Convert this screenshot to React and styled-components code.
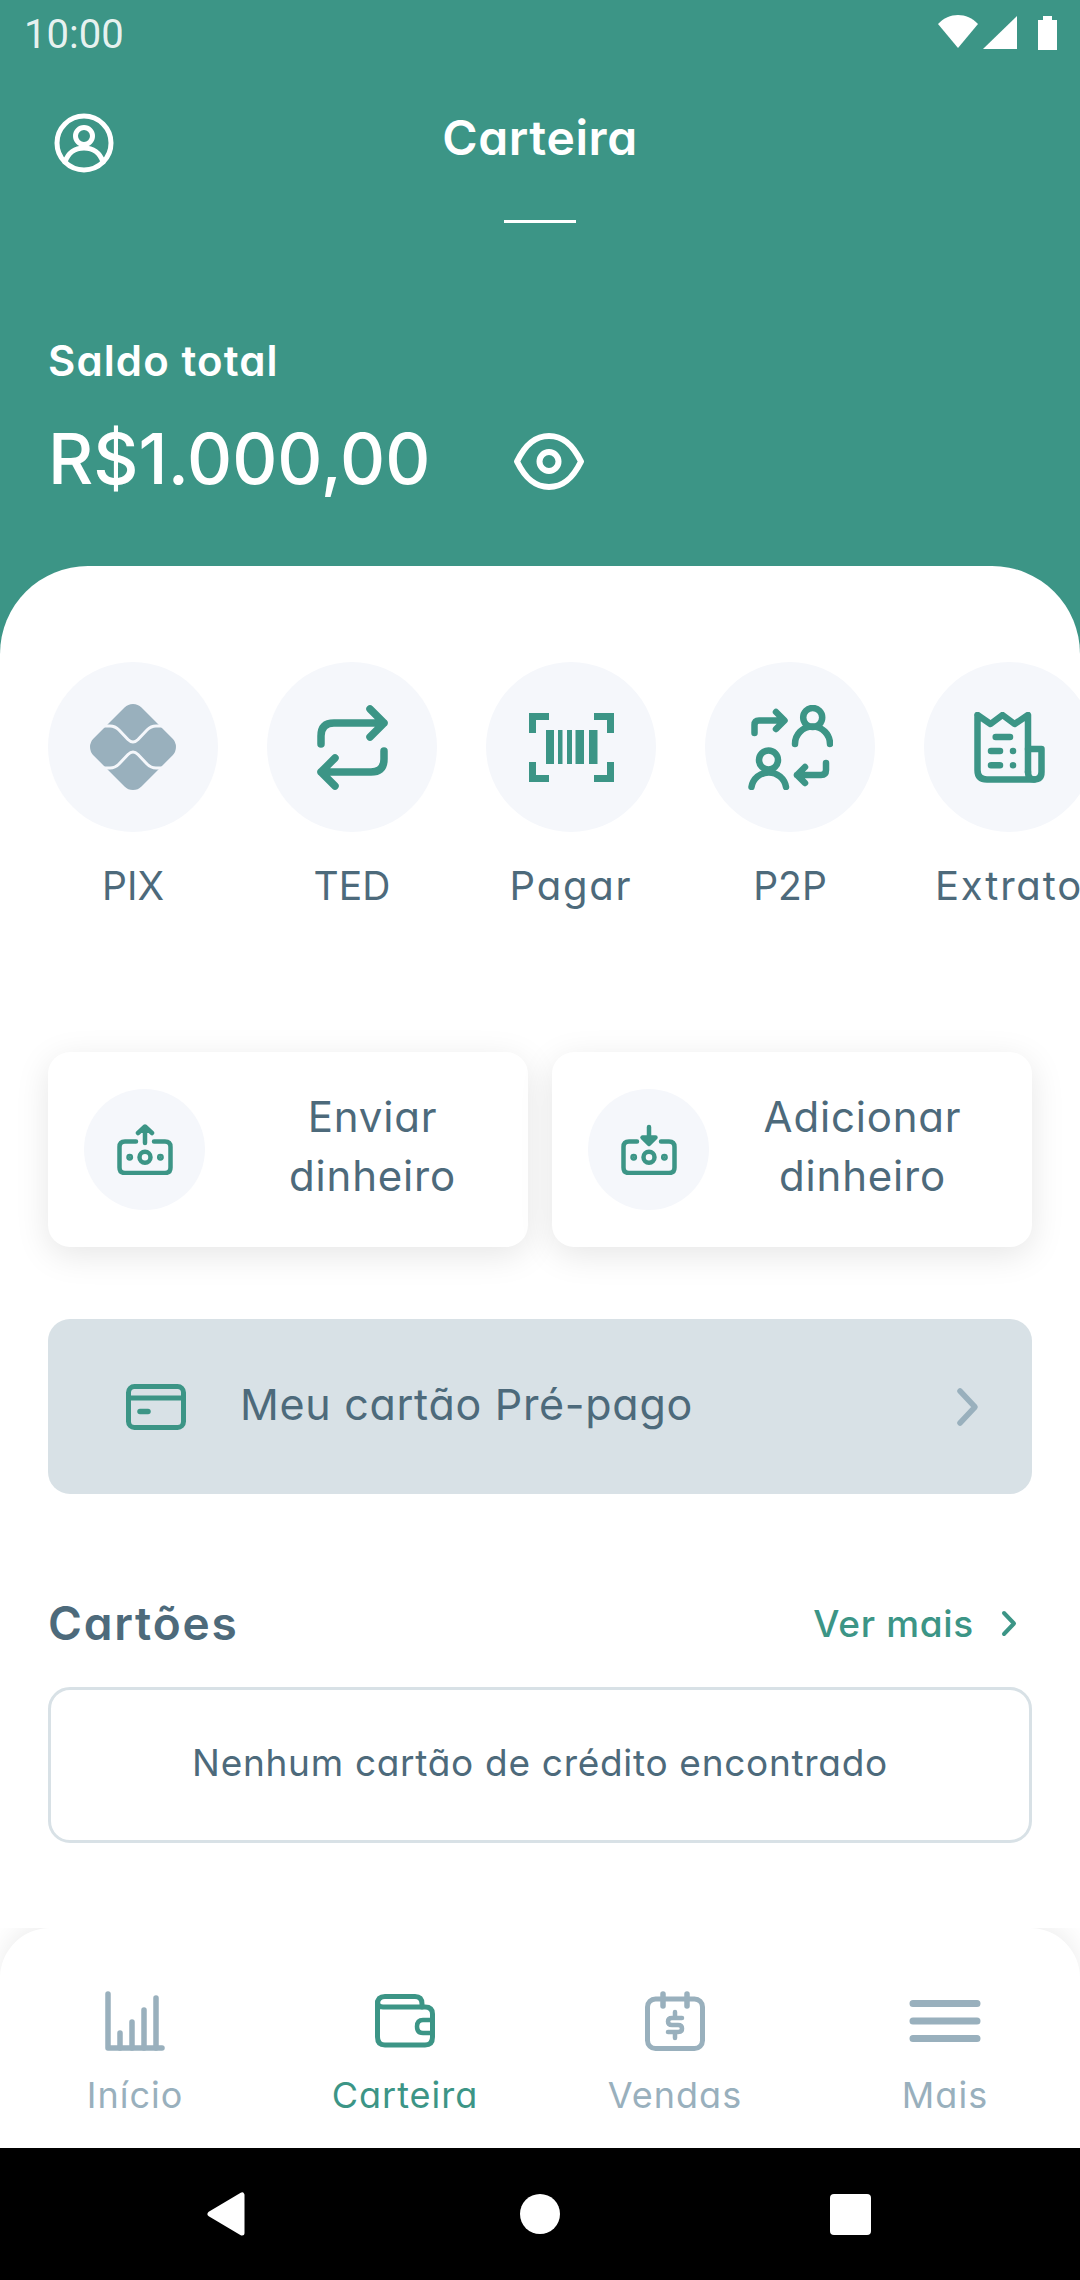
import React from "react";
import styled, { createGlobalStyle } from "styled-components";

const TEAL = "#3c9586";
const SLATE = "#4d6a7b";
const MUTED = "#99b0bd";
const SOFT = "#f5f7fb";
const LINE = "#d8e1e6";

const GlobalStyle = createGlobalStyle`
  html, body { margin: 0; padding: 0; background: #fff; }
  * { box-sizing: border-box; }
  body {
    font-family: Inter, "Open Sans", sans-serif;
    font-feature-settings: "cv11" 1;
  }
`;

const Screen = styled.div`
  width: 1080px;
  height: 2280px;
  display: flex;
  flex-direction: column;
  overflow: hidden;
  background: #fff;
`;

const Header = styled.header`
  height: 654px;
  margin-bottom: -88px;
  flex: none;
  background: ${TEAL};
  color: #fff;
`;

const StatusBar = styled.div`
  height: 70px;
  padding: 15px 22px 0 24px;
  display: flex;
  justify-content: space-between;
  align-items: flex-start;
`;

const Clock = styled.span`
  font-family: Roboto, sans-serif;
  font-size: 40px;
  line-height: 40px;
  color: rgba(255, 255, 255, 0.9);
`;

const TitleRow = styled.div`
  display: grid;
  grid-template-columns: 1fr auto 1fr;
  padding: 43px 54px 0;
`;

const TitleBlock = styled.div`
  display: flex;
  flex-direction: column;
  align-items: center;
`;

const Title = styled.h1`
  margin: 0;
  font-size: 48px;
  line-height: 50px;
  font-weight: 600;
  letter-spacing: 0.6px;
`;

const TitleRule = styled.div`
  width: 72px;
  height: 3px;
  margin-top: 57px;
  background: #fff;
`;

const Balance = styled.div`
  padding: 113px 48px 0;
`;

const BalanceLabel = styled.div`
  font-size: 42px;
  line-height: 50px;
  font-weight: 600;
  letter-spacing: 1.1px;
`;

const BalanceRow = styled.div`
  display: flex;
  align-items: center;
  gap: 84px;
  margin-top: 28px;
`;

const BalanceValue = styled.div`
  font-size: 70px;
  line-height: 90px;
  font-weight: 500;
`;

const EyeSlot = styled.div`
  display: flex;
  margin-top: 5px;
`;

const Sheet = styled.main`
  position: relative;
  flex: 1;
  min-height: 0;
  padding-top: 96px;
  background: #fff;
  border-radius: 88px 88px 0 0;
`;

const ActionStrip = styled.div`
  display: flex;
  gap: 49px;
  padding-left: 48px;
  overflow: hidden;
`;

const Action = styled.div`
  flex: none;
  width: 170px;
  display: flex;
  flex-direction: column;
  align-items: center;
`;

const Disc = styled.div`
  flex: none;
  width: ${(p) => p.$size}px;
  height: ${(p) => p.$size}px;
  display: flex;
  align-items: center;
  justify-content: center;
  border-radius: 50%;
  background: ${SOFT};
`;

const ActionLabel = styled.span`
  margin-top: 24px;
  font-size: ${(p) => (p.$caps ? 39 : 40)}px;
  line-height: 60px;
  letter-spacing: ${(p) => (p.$caps ? 0 : 1.8)}px;
  white-space: nowrap;
  color: ${SLATE};
`;

const Content = styled.div`
  padding: 136px 48px 0;
`;

const MoneyCards = styled.div`
  display: grid;
  grid-template-columns: 480px 480px;
  gap: 24px;
`;

const MoneyCard = styled.div`
  height: 195px;
  padding-left: 36px;
  display: flex;
  align-items: center;
  background: #fff;
  border-radius: 22px;
  box-shadow: 0 8px 34px rgba(0, 0, 0, 0.1);
`;

const MoneyText = styled.div`
  flex: 1;
  padding-bottom: 8px;
  padding-left: ${(p) => p.$left}px;
  padding-right: ${(p) => p.$right}px;
  text-align: center;
  font-size: 42px;
  line-height: 59px;
  letter-spacing: 0.8px;
  color: ${SLATE};
`;

const PrepaidRow = styled.div`
  height: 175px;
  margin-top: 72px;
  padding: 0 53px 0 78px;
  display: flex;
  align-items: center;
  background: ${LINE};
  border-radius: 22px;
`;

const PrepaidText = styled.span`
  flex: 1;
  margin-left: 54px;
  padding-bottom: 6px;
  font-size: 43px;
  letter-spacing: 0.7px;
  color: ${SLATE};
`;

const SectionHead = styled.div`
  height: 60px;
  margin-top: 99px;
  display: flex;
  align-items: center;
  justify-content: space-between;
  padding-right: 15px;
`;

const SectionTitle = styled.h2`
  margin: 0;
  font-size: 46px;
  font-weight: 600;
  letter-spacing: 1.8px;
  color: ${SLATE};
`;

const MoreLink = styled.div`
  display: flex;
  align-items: center;
  gap: 27px;
  font-size: 37px;
  font-weight: 500;
  letter-spacing: 0.7px;
  color: ${TEAL};
`;

const EmptyBox = styled.div`
  height: 156px;
  margin-top: 34px;
  padding-bottom: 6px;
  display: flex;
  align-items: center;
  justify-content: center;
  border: 3px solid ${LINE};
  border-radius: 22px;
  font-size: 37px;
  letter-spacing: 0.7px;
  color: ${SLATE};
`;

const TabBar = styled.nav`
  flex: none;
  height: 220px;
  padding-top: 63px;
  display: grid;
  grid-template-columns: repeat(4, 270px);
  background: #fff;
  border-radius: 50px 50px 0 0;
  box-shadow: 0 -6px 24px rgba(0, 0, 0, 0.07);
`;

const Tab = styled.div`
  display: flex;
  flex-direction: column;
  align-items: center;
  color: ${(p) => (p.$active ? TEAL : MUTED)};
`;

const TabIcon = styled.div`
  height: 60px;
  display: flex;
  align-items: center;
  justify-content: center;
`;

const TabLabel = styled.span`
  margin-top: 19px;
  font-size: 36px;
  line-height: 50px;
  letter-spacing: 1px;
`;

const SystemBar = styled.div`
  flex: none;
  height: 132px;
  padding-right: 2px;
  display: flex;
  align-items: center;
  justify-content: center;
  background: #000;
`;

const BackButton = styled.svg`
  margin-right: 275px;
`;

const HomeDot = styled.div`
  width: 40px;
  height: 40px;
  margin-right: 270px;
  border-radius: 50%;
  background: #fff;
`;

const RecentSquare = styled.div`
  width: 41px;
  height: 41px;
  border-radius: 4px;
  background: #fff;
`;

const Stroke = ({ w, h, width = 6, color = TEAL, children }) => (
  <svg
    width={w}
    height={h}
    viewBox={`0 0 ${w} ${h}`}
    fill="none"
    stroke={color}
    strokeWidth={width}
    strokeLinecap="round"
    strokeLinejoin="round"
  >
    {children}
  </svg>
);

const StatusIcons = () => (
  <svg width="120" height="36" viewBox="0 0 120 36" fill="#fff">
    <path d="M0 9C11-3 29-3 40 9L20 33Z" />
    <path d="M79 1V34H45Z" />
    <path d="M100 5h5V1h9v4h5v30h-19Z" />
  </svg>
);

const ProfileIcon = () => (
  <Stroke w={60} h={60} width={5} color="#fff">
    <circle cx="30" cy="30" r="27" />
    <circle cx="30" cy="23" r="8.5" />
    <path d="M11 49C14 40 21 35 30 35C39 35 46 40 49 49" />
  </Stroke>
);

const EyeIcon = () => (
  <Stroke w={70} h={57} width={6} color="#fff">
    <path d="M3 28.5C12 10 22 3 35 3C48 3 58 10 67 28.5C58 47 48 54 35 54C22 54 12 47 3 28.5Z" />
    <circle cx="35" cy="28.5" r="9.5" />
  </Stroke>
);

const PixIcon = () => (
  <svg width="86" height="86" viewBox="0 0 86 86" fill="none">
    <rect x="9.1" y="9.1" width="67.8" height="67.8" rx="12" fill={MUTED} transform="rotate(45 43 43)" />
    <g stroke={SOFT} strokeWidth="3">
      <path d="M4 22H20Q25 22 29 26L38 35.5Q43 40.5 48 35.5L57 26Q61 22 66 22H82" />
      <path d="M4 64H20Q25 64 29 60L38 50.5Q43 45.5 48 50.5L57 60Q61 64 66 64H82" />
    </g>
  </svg>
);

const TedIcon = () => (
  <Stroke w={71} h={85} width={7.5}>
    <path d="M4 39V31Q4 18 17 18H67M53 4L67 18L53 32" />
    <path d="M67 46V54Q67 67 54 67H4M18 53L4 67L18 81" />
  </Stroke>
);

const BarcodeIcon = () => (
  <Stroke w={85} h={69} width={7}>
    <g strokeLinecap="butt" strokeLinejoin="miter">
      <path d="M3.5 20V3.5H20M65 3.5H81.5V20M3.5 49V65.5H20M65 65.5H81.5V49" />
    </g>
    <g fill={TEAL} stroke="none">
      <rect x="17" y="17" width="8" height="34" />
      <rect x="29" y="17" width="4.5" height="34" />
      <rect x="38" y="17" width="5" height="34" />
      <rect x="46.5" y="17" width="8.5" height="34" />
      <rect x="60" y="17" width="8.5" height="34" />
    </g>
  </Stroke>
);

const TransferIcon = () => (
  <Stroke w={85} h={85} width={6.5}>
    <circle cx="64.7" cy="12.5" r="9.5" />
    <path d="M47 39A17.5 17.5 0 0 1 82 39" />
    <circle cx="20.5" cy="55" r="9.5" />
    <path d="M3.5 82A17.5 17.5 0 0 1 38 82" />
    <path d="M6.5 28V20Q6.5 15.5 11 15.5H36M28 7L36.5 15.5L28 24" />
    <path d="M78 58V65Q78 70 73 70H49M57 62L49 70L57 78" />
  </Stroke>
);

const ReceiptIcon = () => (
  <Stroke w={71} h={71} width={6.5}>
    <path d="M3.5 3V58Q3.5 67.5 13 67.5H60M3.5 3L16.5 12L28.5 3L40.6 12L54 3V60" />
    <path d="M54 37H67.5V60Q67.5 67.5 60 67.5Q54 67.5 54 60" />
    <path d="M21.7 25H36M17 39H26M17 53.3H26" />
    <path d="M39 39H39.01M39 53.3H39.01" />
  </Stroke>
);

const actions = [
  { label: "PIX", caps: true, icon: <PixIcon /> },
  { label: "TED", caps: true, icon: <TedIcon /> },
  { label: "Pagar", icon: <BarcodeIcon /> },
  { label: "P2P", caps: true, icon: <TransferIcon /> },
  { label: "Extrato", icon: <ReceiptIcon /> },
];

// same banknote, the arrow and the gap it sits in change
const MoneyIcon = ({ arrow }) => {
  const up = arrow === "up";
  const left = up ? 19 : 16;
  const right = up ? 37 : 40;
  return (
    <Stroke w={56} h={51} width={4.5}>
      <path d={`M${left} 17.5H8Q2.5 17.5 2.5 23V43.5Q2.5 49 8 49H48Q53.5 49 53.5 43.5V23Q53.5 17.5 48 17.5H${right}`} />
      <circle cx="28" cy="33.3" r="5.5" />
      <circle cx="12.7" cy="33.3" r="1.2" fill={TEAL} />
      <circle cx="43.4" cy="33.3" r="1.2" fill={TEAL} />
      {up ? (
        <path d="M28 19V3M21 9L28 2.5L35 9" fill={TEAL} />
      ) : (
        <path d="M28 3V18M21.5 13.5H34.5L28 20Z" fill={TEAL} />
      )}
    </Stroke>
  );
};

const CardIcon = () => (
  <Stroke w={60} h={46} width={5}>
    <rect x="2.5" y="2.5" width="55" height="41" rx="6" />
    <path d="M2.5 14H57.5" />
    <path d="M14 27.5H22" strokeWidth="5.5" />
  </Stroke>
);

const Chevron = ({ w, h, width, color, d }) => (
  <Stroke w={w} h={h} width={width} color={color}>
    <path d={d} />
  </Stroke>
);

const ChartIcon = () => (
  <Stroke w={60} h={60} width={5.5} color={MUTED}>
    <path d="M3 3V57H57" />
    <path d="M15 42V57M27 31V57M39 19V57M51 7V57" />
  </Stroke>
);

const WalletIcon = () => (
  <Stroke w={60} h={54} width={5} color={TEAL}>
    <path d="M2.5 10Q2.5 2.5 10 2.5H40Q47 2.5 47 10V13" />
    <path d="M2.5 8V43Q2.5 51 10 51H50Q57.5 51 57.5 43V20Q57.5 13 50 13H8Q2.5 13 2.5 8Z" />
    <path d="M56 26H48Q42 26 42 32.5Q42 39 48 39H56" strokeWidth="4.5" />
  </Stroke>
);

const SalesIcon = () => (
  <Stroke w={60} h={60} width={5} color={MUTED}>
    <rect x="2.5" y="8" width="55" height="49.5" rx="8" />
    <path d="M18 3V15M42 3V15" strokeWidth="5.5" />
    <path d="M37 27H27Q23 27 23 30.5Q23 34 27 34H33Q37 34 37 37.5Q37 41 33 41H23M30 21V27M30 41V47" strokeWidth="4.5" />
  </Stroke>
);

const MenuIcon = () => (
  <Stroke w={72} h={46} width={7} color={MUTED}>
    <path d="M4 5.5H68M4 23H68M4 40.5H68" />
  </Stroke>
);

const tabs = [
  { label: "Início", icon: <ChartIcon /> },
  { label: "Carteira", icon: <WalletIcon />, active: true },
  { label: "Vendas", icon: <SalesIcon /> },
  { label: "Mais", icon: <MenuIcon /> },
];

const App = () => (
  <Screen>
    <GlobalStyle />
    <Header>
      <StatusBar>
        <Clock>10:00</Clock>
        <StatusIcons />
      </StatusBar>
      <TitleRow>
        <ProfileIcon />
        <TitleBlock>
          <Title>Carteira</Title>
          <TitleRule />
        </TitleBlock>
      </TitleRow>
      <Balance>
        <BalanceLabel>Saldo total</BalanceLabel>
        <BalanceRow>
          <BalanceValue>R$1.000,00</BalanceValue>
          <EyeSlot>
            <EyeIcon />
          </EyeSlot>
        </BalanceRow>
      </Balance>
    </Header>

    <Sheet>
      <ActionStrip>
        {actions.map((a) => (
          <Action key={a.label}>
            <Disc $size={170}>{a.icon}</Disc>
            <ActionLabel $caps={a.caps}>{a.label}</ActionLabel>
          </Action>
        ))}
      </ActionStrip>

      <Content>
        <MoneyCards>
          <MoneyCard>
            <Disc $size={121}>
              <MoneyIcon arrow="up" />
            </Disc>
            <MoneyText $left={12} $right={0}>
              Enviar
              <br />
              dinheiro
            </MoneyText>
          </MoneyCard>
          <MoneyCard>
            <Disc $size={121}>
              <MoneyIcon arrow="down" />
            </Disc>
            <MoneyText $left={0} $right={16}>
              Adicionar
              <br />
              dinheiro
            </MoneyText>
          </MoneyCard>
        </MoneyCards>

        <PrepaidRow>
          <CardIcon />
          <PrepaidText>Meu cartão Pré-pago</PrepaidText>
          <Chevron w={23} h={40} width={5.5} color={MUTED} d="M4 4L19 20L4 36" />
        </PrepaidRow>

        <SectionHead>
          <SectionTitle>Cartões</SectionTitle>
          <MoreLink>
            Ver mais
            <Chevron w={16} h={27} width={4} color={TEAL} d="M3 3L13 13.5L3 24" />
          </MoreLink>
        </SectionHead>

        <EmptyBox>Nenhum cartão de crédito encontrado</EmptyBox>
      </Content>
    </Sheet>

    <TabBar>
      {tabs.map((t) => (
        <Tab key={t.label} $active={t.active}>
          <TabIcon>{t.icon}</TabIcon>
          <TabLabel>{t.label}</TabLabel>
        </Tab>
      ))}
    </TabBar>

    <SystemBar>
      <BackButton width="38" height="44" viewBox="0 0 38 44" fill="#fff" stroke="#fff" strokeWidth="5" strokeLinejoin="round">
        <path d="M35 3V41L3 22Z" />
      </BackButton>
      <HomeDot />
      <RecentSquare />
    </SystemBar>
  </Screen>
);

export default App;
